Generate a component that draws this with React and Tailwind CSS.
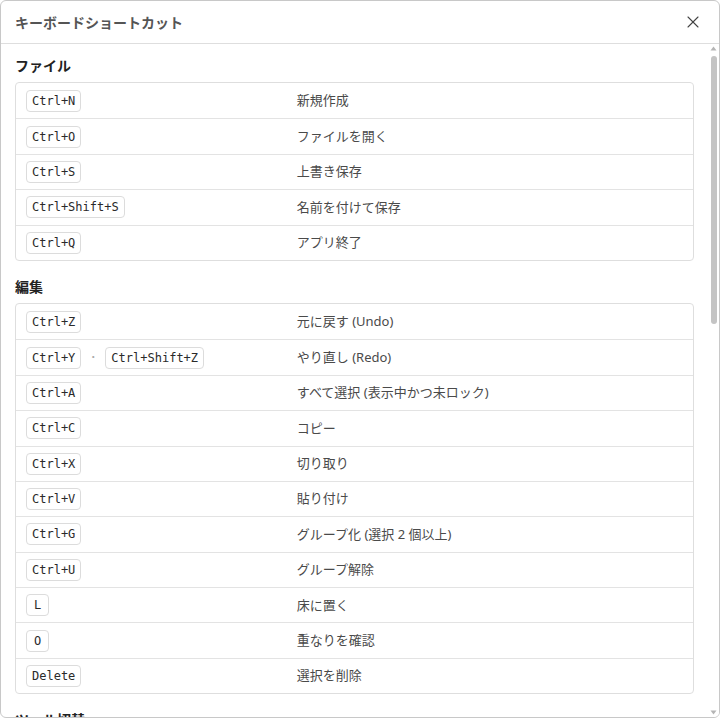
import React from "react";
import { X } from "lucide-react";

const sections = [
    {
        title: "ファイル",
        items: [
            { keys: ["Ctrl+N"], label: "新規作成" },
            { keys: ["Ctrl+O"], label: "ファイルを開く" },
            { keys: ["Ctrl+S"], label: "上書き保存" },
            { keys: ["Ctrl+Shift+S"], label: "名前を付けて保存" },
            { keys: ["Ctrl+Q"], label: "アプリ終了" },
        ],
    },
    {
        title: "編集",
        items: [
            { keys: ["Ctrl+Z"], label: "元に戻す (Undo)" },
            { keys: ["Ctrl+Y", "Ctrl+Shift+Z"], label: "やり直し (Redo)" },
            { keys: ["Ctrl+A"], label: "すべて選択 (表示中かつ未ロック)" },
            { keys: ["Ctrl+C"], label: "コピー" },
            { keys: ["Ctrl+X"], label: "切り取り" },
            { keys: ["Ctrl+V"], label: "貼り付け" },
            { keys: ["Ctrl+G"], label: "グループ化 (選択 2 個以上)" },
            { keys: ["Ctrl+U"], label: "グループ解除" },
            { keys: ["L"], label: "床に置く" },
            { keys: ["O"], label: "重なりを確認" },
            { keys: ["Delete"], label: "選択を削除" },
        ],
    },
    {
        title: "ツール切替",
        items: [
            { keys: ["V"], label: "選択ツール" },
            { keys: ["M"], label: "移動ツール" },
            { keys: ["R"], label: "回転ツール" },
            { keys: ["S"], label: "拡大縮小ツール" },
            { keys: ["Esc"], label: "選択を解除" },
        ],
    },
    {
        title: "表示",
        items: [
            { keys: ["F"], label: "選択にフォーカス" },
            { keys: ["H"], label: "選択を非表示" },
            { keys: ["Alt+H"], label: "すべて表示" },
            { keys: ["G"], label: "グリッド表示の切替" },
            { keys: ["Ctrl+0"], label: "視点をリセット" },
        ],
    },
    {
        title: "その他",
        items: [
            { keys: ["F1"], label: "ヘルプを表示" },
            { keys: ["Ctrl+,"], label: "設定を開く" },
            { keys: ["?"], label: "このショートカット一覧" },
        ],
    },
];

const Kbd = ({ children }) => (
    <kbd className="inline-block min-w-[23px] rounded-[4px] border border-[#dcdcdc] bg-white px-[5px] py-[3px] text-center text-[12px] leading-[14px] text-[#2a2a2a] [font-family:'DejaVu_Sans_Mono',monospace]">
        {children}
    </kbd>
);

// thin scrollbar look for the list pane
const ScrollTrack = () => (
    <div className="flex w-[11px] shrink-0 flex-col items-center bg-white">
        <svg width="7" height="5" viewBox="0 0 7 5" className="mt-[2px]">
            <path d="M3.5 0.5 L6.5 4.5 L0.5 4.5 Z" fill="#b5b5b5" />
        </svg>
        <div className="mt-[5px] h-[268px] w-[6px] rounded-full bg-[#c4c4c4]" />
        <div className="flex-1" />
        <svg width="7" height="5" viewBox="0 0 7 5" className="mb-[2px]">
            <path d="M0.5 0.5 L6.5 0.5 L3.5 4.5 Z" fill="#b5b5b5" />
        </svg>
    </div>
);

const App = () => {
    return (
        <div className="h-[718px] w-[720px] flex flex-col overflow-hidden rounded-[6px] border border-[#c8c8c8] bg-white [font-family:'Noto_Sans','Noto_Sans_CJK_JP',sans-serif]">
            <div className="flex h-[43px] shrink-0 items-center justify-between border-b border-[#dedede] pl-[14px] pr-[16px]">
                <h2 className="text-[14px] font-bold text-[#555]">キーボードショートカット</h2>
                <X size={20} strokeWidth={1.3} className="text-[#444]" />
            </div>

            <div className="flex min-h-0 flex-1">
                <div className="flex-1 overflow-y-auto px-[14px] pt-[12px] pb-5 [scrollbar-width:none]">
                    {sections.map((section, i) => (
                        <div key={section.title} className={i > 0 ? "mt-[16px]" : ""}>
                            <h3 className="mb-[6px] text-[14px] leading-[20px] font-bold text-[#222]">{section.title}</h3>
                            <div className="rounded-[4px] border border-[#dedede]">
                                {section.items.map((item, j) => (
                                    <div
                                        key={item.label}
                                        className={`flex h-[35.4px] items-center ${j > 0 ? "border-t border-[#e3e3e3]" : ""}`}
                                    >
                                        <div className="flex w-[40%] items-center pl-[10px]">
                                            {item.keys.map((k, n) => (
                                                <React.Fragment key={k}>
                                                    {n > 0 && <span className="mx-[7px] text-[10px] text-[#aaa]">・</span>}
                                                    <Kbd>{k}</Kbd>
                                                </React.Fragment>
                                            ))}
                                        </div>
                                        <div className="pl-[10px] text-[13px] text-[#4a4a4a]">{item.label}</div>
                                    </div>
                                ))}
                            </div>
                        </div>
                    ))}
                </div>
                <ScrollTrack />
            </div>
        </div>
    );
};

export default App;
